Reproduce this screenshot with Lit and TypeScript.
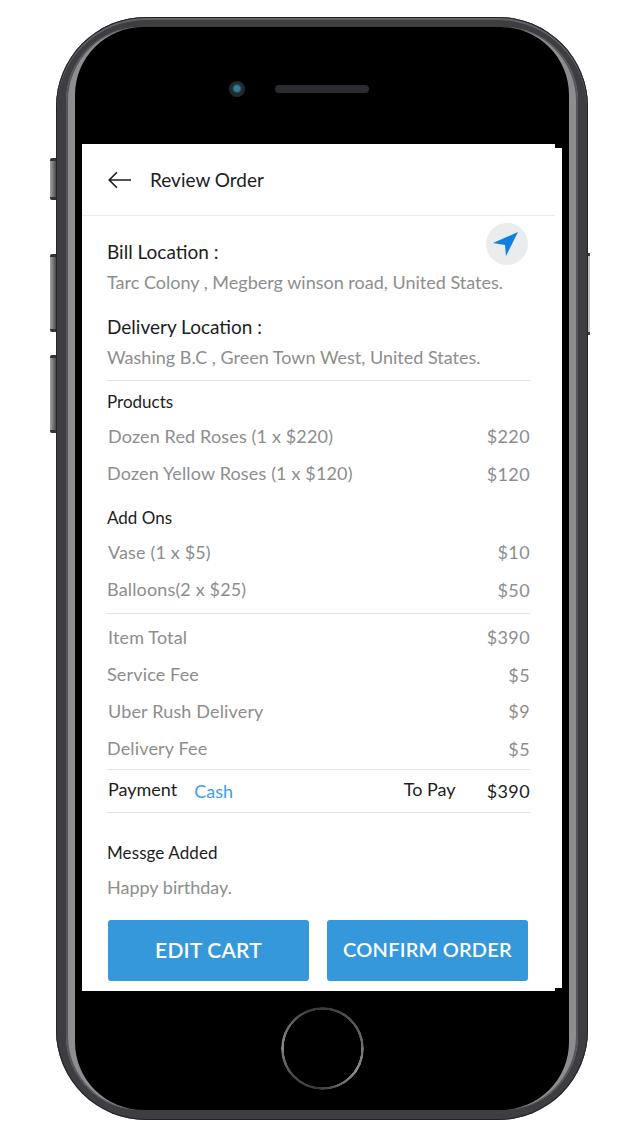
import { LitElement, css, html } from 'lit';
import { customElement } from 'lit/decorators.js';

type Line = { label: string; price: string; dx: number; dy: number };

const products: Line[] = [
  { label: 'Dozen Red Roses (1 x $220)', price: '$220', dx: 1, dy: 0 },
  { label: 'Dozen Yellow Roses (1 x $120)', price: '$120', dx: 0, dy: 1 },
];

const addOns: Line[] = [
  { label: 'Vase (1 x $5)', price: '$10', dx: 1, dy: 0 },
  { label: 'Balloons(2 x $25)', price: '$50', dx: 0, dy: 1 },
];

const totals: Line[] = [
  { label: 'Item Total', price: '$390', dx: 1, dy: 0 },
  { label: 'Service Fee', price: '$5', dx: 0, dy: 1 },
  { label: 'Uber Rush Delivery', price: '$9', dx: 1, dy: 0 },
  { label: 'Delivery Fee', price: '$5', dx: 0, dy: 1 },
];

@customElement('app-root')
export class AppRoot extends LitElement {
  static styles = css`
    :host {
      display: block;
      height: 1137px;
      overflow: hidden;
      background: #fff;
      font-family: Lato, "Open Sans", sans-serif;
      font-size: 18px;
      color: #1d1d1f;
    }

    .phone {
      position: relative;
      box-sizing: border-box;
      width: 532px;
      height: 1103px;
      margin: 17px 0 0 56px;
      padding: 10px 0;
      border-radius: 90px;
      background: #3d3d42;
      box-shadow: inset 0 0 0 1px #232326, inset 0 2px 0 1px #626268;
    }

    .side {
      position: absolute;
      left: -6px;
      box-sizing: border-box;
      width: 6px;
      background: linear-gradient(90deg, #a6a6a8, #4a4a4e);
      border-top: 3px solid #333336;
      border-bottom: 3px solid #333336;
      border-radius: 2px 0 0 2px;
    }

    .mute { top: 141px; height: 42px; }
    .vol-up { top: 237px; height: 78px; }
    .vol-down { top: 338px; height: 78px; }

    .power {
      position: absolute;
      right: -2px;
      top: 236px;
      box-sizing: border-box;
      width: 2px;
      height: 82px;
      background: #c4c4c4;
      border-top: 3px solid #3d3d42;
      border-bottom: 3px solid #3d3d42;
    }

    .rim {
      height: 100%;
      margin: 0 10px;
      border-radius: 74px;
      background: #8d8d90;
      box-shadow: inset 2px 0 0 #55555a, inset -2px 0 0 #55555a;
    }

    .face {
      box-sizing: border-box;
      height: 100%;
      margin: 0 9px;
      border-radius: 68px;
      background: #000;
      display: flex;
      flex-direction: column;
    }

    .top {
      box-sizing: border-box;
      height: 117px;
      padding: 7px 0 0 154px;
      display: flex;
      align-items: center;
      gap: 30px;
    }

    .camera {
      box-sizing: border-box;
      width: 16px;
      height: 16px;
      border-radius: 50%;
      border: 3px solid #26282c;
      background: radial-gradient(circle at 50% 45%, #2f7f95 0 35%, #0c2a38 70%);
    }

    .speaker {
      width: 94px;
      height: 8px;
      border-radius: 4px;
      background: #2c2c30;
    }

    .screen {
      box-sizing: border-box;
      width: 480px;
      height: 847px;
      margin-left: 7px;
      display: flex;
    }

    .main {
      width: 473px;
      background: #fff;
      display: flex;
      flex-direction: column;
    }

    .strip {
      width: 7px;
      margin: 4px 0 3px;
      background: #fff;
    }

    .header {
      box-sizing: border-box;
      height: 72px;
      padding-left: 26px;
      border-bottom: 1px solid #e2eef2;
      display: flex;
      align-items: center;
      gap: 18px;
      font-size: 19px;
    }

    .header svg { display: block; }

    .body {
      position: relative;
      padding: 0 25px;
    }

    .locate {
      position: absolute;
      left: 404px;
      top: 7px;
      width: 42px;
      height: 42px;
      border-radius: 50%;
      background: #ebecee;
      display: flex;
      align-items: center;
      justify-content: center;
    }

    .heading {
      height: 30px;
      line-height: 30px;
      font-size: 19px;
    }

    .gray {
      color: #8d8d8d;
    }

    .address {
      height: 30px;
      line-height: 30px;
      margin-bottom: 15px;
    }

    .first { margin-top: 21px; }
    .last { margin-bottom: 8px; }

    .rule {
      width: 423px;
      height: 1px;
      background: #e3e3e3;
    }

    .title {
      height: 24px;
      line-height: 24px;
      font-size: 17px;
    }

    .products-title { margin-top: 9px; margin-bottom: 4px; }
    .addons-title { margin-top: 14px; margin-bottom: 4px; }

    .row {
      width: 423px;
      height: 37px;
      line-height: 36px;
      letter-spacing: 0.15px;
      display: flex;
      justify-content: space-between;
    }

    .row span:last-child { letter-spacing: 0.4px; }

    .list { margin-bottom: 5px; }
    .totals { margin-top: 5px; margin-bottom: 2px; }

    .pay {
      box-sizing: border-box;
      width: 423px;
      height: 44px;
      padding-bottom: 4px;
      border-top: 1px solid #e3e3e3;
      border-bottom: 1px solid #e3e3e3;
      display: flex;
      align-items: center;
    }

    .pay .left { margin-left: 1px; }
    .cash { margin-left: 17px; color: #3f9fe6; padding-top: 3px; }
    .topay { margin-left: auto; padding-right: 31px; }
    .amount { padding-top: 3px; letter-spacing: 0.4px; }

    .message {
      margin-top: 28px;
      height: 24px;
      line-height: 24px;
      font-size: 17px;
      letter-spacing: 0.1px;
    }

    .note {
      margin-top: 10px;
      height: 24px;
      line-height: 24px;
    }

    .actions {
      margin-top: 21px;
      margin-left: 1px;
      display: flex;
      gap: 18px;
    }

    .btn {
      box-sizing: border-box;
      width: 201px;
      height: 61px;
      padding-bottom: 3px;
      border-radius: 3px;
      background: #3498db;
      color: #fff;
      font-size: 20px;
      font-weight: 600;
      letter-spacing: 0.2px;
      display: flex;
      align-items: center;
      justify-content: center;
    }

    .btn.edit {
      font-size: 21px;
    }

    .bottom {
      display: flex;
      justify-content: center;
      padding-top: 16px;
    }

    .home {
      width: 83px;
      height: 83px;
      border-radius: 50%;
      background: conic-gradient(#3a3a3c, #5a5a5e 60deg, #8e8e90 125deg, #3a3a3c 185deg, #4a4a4e 230deg, #8a8a8c 275deg, #3a3a3c 340deg);
      -webkit-mask: radial-gradient(circle, transparent 38.5px, #000 39px);
      mask: radial-gradient(circle, transparent 38.5px, #000 39px);
    }
  `;

  private line(item: Line) {
    return html`
      <div class="row gray">
        <span style="padding-left:${item.dx}px">${item.label}</span>
        <span style="padding-top:${item.dy}px">${item.price}</span>
      </div>
    `;
  }

  render() {
    return html`
      <div class="phone">
        <div class="side mute"></div>
        <div class="side vol-up"></div>
        <div class="side vol-down"></div>
        <div class="power"></div>
        <div class="rim">
          <div class="face">
            <div class="top">
              <div class="camera"></div>
              <div class="speaker"></div>
            </div>
            <div class="screen">
              <div class="main">
                <div class="header">
                  <svg width="24" height="18" viewBox="0 0 24 18" fill="none" stroke="#1d1d1f" stroke-width="1.6">
                    <path d="M23 9H1.5M9 1.2L1.2 9L9 16.8" />
                  </svg>
                  <span>Review Order</span>
                </div>
                <div class="body">
                  <div class="locate">
                    <svg width="28" height="28" viewBox="0 0 28 28">
                      <path d="M25 2L0 13L12 15L13 26Z" fill="#1080e0" />
                    </svg>
                  </div>
                  <div class="heading first">Bill Location :</div>
                  <div class="address gray">Tarc Colony , Megberg winson road, United States.</div>
                  <div class="heading">Delivery Location :</div>
                  <div class="address gray last">Washing B.C , Green Town West, United States.</div>
                  <div class="rule"></div>
                  <div class="title products-title">Products</div>
                  ${products.map((p) => this.line(p))}
                  <div class="title addons-title">Add Ons</div>
                  <div class="list">${addOns.map((p) => this.line(p))}</div>
                  <div class="rule"></div>
                  <div class="totals">${totals.map((p) => this.line(p))}</div>
                  <div class="pay">
                    <span class="left">Payment</span>
                    <span class="cash">Cash</span>
                    <span class="topay">To Pay</span>
                    <span class="amount">$390</span>
                  </div>
                  <div class="message">Messge Added</div>
                  <div class="note gray">Happy birthday.</div>
                  <div class="actions">
                    <div class="btn edit">EDIT CART</div>
                    <div class="btn">CONFIRM ORDER</div>
                  </div>
                </div>
              </div>
              <div class="strip"></div>
            </div>
            <div class="bottom"><div class="home"></div></div>
          </div>
        </div>
      </div>
    `;
  }
}
